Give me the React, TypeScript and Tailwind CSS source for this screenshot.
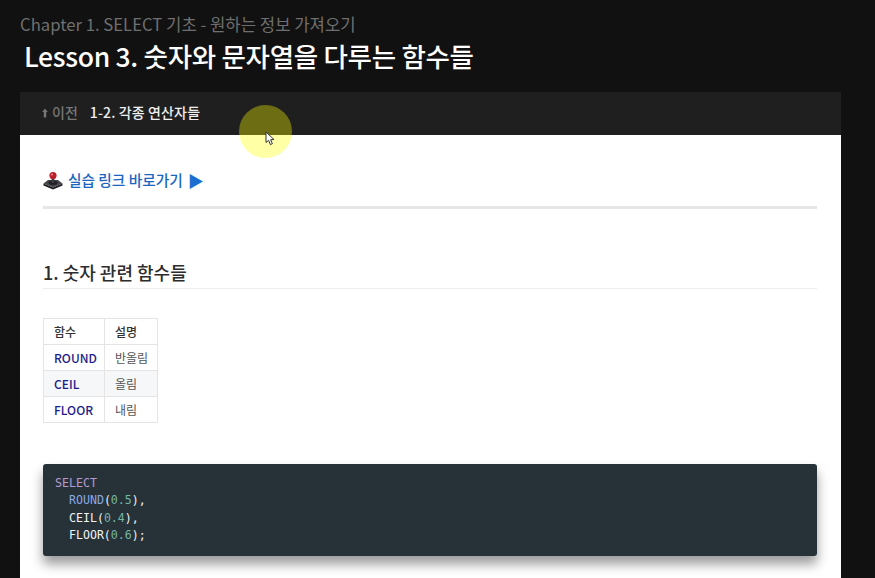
const rows = [
  { name: "ROUND", desc: "반올림", striped: false },
  { name: "CEIL", desc: "올림", striped: true },
  { name: "FLOOR", desc: "내림", striped: false },
];

const cjk = "font-['Noto_Sans_CJK_KR','Noto_Sans',sans-serif]";

function Joystick() {
  return (
    <svg width="20" height="20" viewBox="0 0 20 20" className="shrink-0">
      <path d="M0.5 13.5 L10 17.5 L19.5 13.5 L19.5 15.5 L10 19.5 L0.5 15.5 Z" fill="#1a1c20" />
      <path d="M0.5 13.5 L5 10 H15 L19.5 13.5 L10 17.5 Z" fill="#46464c" />
      <ellipse cx="10" cy="12.8" rx="4.5" ry="2.2" fill="#222226" />
      <rect x="8.6" y="7" width="2.8" height="6" fill="#3a3a40" />
      <circle cx="10" cy="5.6" r="3.6" fill="#b8202c" />
      <circle cx="9" cy="4.6" r="1.1" fill="#ee7a80" />
    </svg>
  );
}

function UpArrow() {
  return (
    <svg width="6" height="10" viewBox="0 0 6 10" className="ml-[1px] shrink-0">
      <path d="M3 0.5 L5.8 4 H4.2 V9.5 H1.8 V4 H0.2 Z" fill="#777777" />
    </svg>
  );
}

function Cursor() {
  return (
    <svg width="11" height="15" viewBox="0 0 11 15">
      <path
        d="M1 1 L1 11.5 L3.6 9.4 L5.4 13.6 L7.4 12.7 L5.6 8.7 L9 8.5 Z"
        fill="#fff"
        stroke="#333"
        strokeWidth="1"
        strokeLinejoin="round"
      />
    </svg>
  );
}

export default function App() {
  return (
    <div className={`relative h-[578px] w-[875px] overflow-hidden bg-[#111111] pl-[20px] ${cjk}`}>
      <div className="h-[92px]">
        <p className="pt-[12px] text-[16.7px] leading-[24px] text-[#6f6f6f]">
          Chapter 1. SELECT 기초 - 원하는 정보 가져오기
        </p>
        <h1 className="ml-[4px] mt-[1px] text-[26.5px] leading-[38px] font-medium tracking-[-0.3px] text-white">
          Lesson 3. 숫자와 문자열을 다루는 함수들
        </h1>
      </div>

      <div className="w-[821px]">
        <div className="flex h-[43px] items-center bg-[#1f1f1f] pb-[2px] pl-[21px] text-[14px] font-medium">
          <UpArrow />
          <span className="ml-[4px] text-[#777777]">이전</span>
          <span className="ml-[12px] tracking-[0.01em] text-[#f0f0f0]">1-2. 각종 연산자들</span>
        </div>

        <div className="h-[443px] bg-white pl-[23px] pr-[24px]">
          <a className="flex items-center gap-[5px] pt-[34px] text-[14.7px] leading-[22px] font-medium text-[#1a66c0]">
            <Joystick />
            <span>실습 링크 바로가기</span>
            <span className="text-[16px] text-[#1a6fd0]">▶</span>
          </a>
          <hr className="mt-[15px] h-[3px] border-0 bg-[#e6e6e6]" />

          <h2 className="mt-[48px] border-b border-[#eeeeee] pb-[1px] text-[18px] leading-[30px] font-medium text-[#2c2c2c]">
            1. 숫자 관련 함수들
          </h2>

          <table className="mt-[29px] border-collapse text-[12px]">
            <thead>
              <tr className="h-[26px]">
                <th className="w-[61px] border border-[#e4e4e4] pl-[10px] text-left font-medium text-[#333333]">함수</th>
                <th className="w-[53px] border border-[#e4e4e4] pl-[10px] text-left font-medium text-[#333333]">설명</th>
              </tr>
            </thead>
            <tbody>
              {rows.map((row) => (
                <tr key={row.name} className={`h-[26px] ${row.striped ? "bg-[#f6f7f8]" : ""}`}>
                  <td className="border border-[#e4e4e4] pl-[10px] font-medium text-[#1c1c8c]">{row.name}</td>
                  <td className="border border-[#e4e4e4] pl-[10px] text-[#555555]">{row.desc}</td>
                </tr>
              ))}
            </tbody>
          </table>

          <pre className="mt-[41px] h-[92px] rounded-[3px] bg-[#263238] px-[12px] py-[11px] font-['DejaVu_Sans_Mono',monospace] text-[11.6px] leading-[17.4px] text-[#f0f2f4] shadow-[0_8px_12px_rgba(0,0,0,0.4)]">
            <span className="text-[#b79ad2]">SELECT</span>
            {"\n  "}
            <span className="text-[#8aa8e4]">ROUND</span>(<span className="text-[#74b5a6]">0.5</span>),
            {"\n  "}CEIL(<span className="text-[#74b5a6]">0.4</span>),
            {"\n  "}FLOOR(<span className="text-[#74b5a6]">0.6</span>);
          </pre>
        </div>
      </div>

      {/* mouse highlight from the screen recording */}
      <div className="absolute left-[239px] top-[105px] h-[53px] w-[53px] rounded-full bg-[#ffff00]/35" />
      <div className="absolute left-[265px] top-[131px]">
        <Cursor />
      </div>
    </div>
  );
}
